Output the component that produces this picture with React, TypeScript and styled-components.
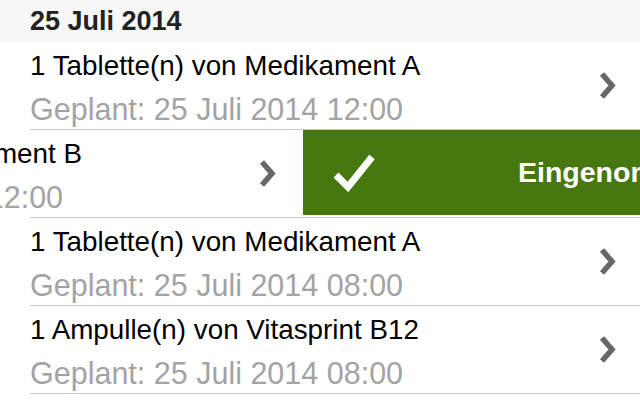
import React from 'react';
import styled, { createGlobalStyle } from 'styled-components';

const GlobalStyle = createGlobalStyle`
  html, body {
    margin: 0;
    padding: 0;
    background: #ffffff;
    overflow: hidden;
  }
  body {
    font-family: "Liberation Sans", Arial, Helvetica, sans-serif;
  }
`;

const Screen = styled.div`
  width: 640px;
  height: 400px;
  overflow: hidden;
  background: #ffffff;
`;

const SectionHeader = styled.div`
  height: 42px;
  display: flex;
  align-items: center;
  padding-left: 30px;
  background: #f7f7f7;
  font-size: 27px;
  font-weight: bold;
  color: #222222;
`;

const Row = styled.div`
  height: 87px;
  overflow: hidden;
`;

const Track = styled.div<{ offset: number }>`
  display: flex;
  height: 100%;
  transform: translateX(${({ offset }) => -offset}px);
`;

const Cell = styled.div`
  flex: 0 0 640px;
  display: flex;
  align-items: center;
  box-sizing: border-box;
  padding: 0 23px 0 30px;
`;

const Texts = styled.div`
  flex: 1;
  align-self: flex-start;
  padding-top: 7px;
  display: flex;
  flex-direction: column;
  white-space: nowrap;
`;

const Title = styled.div`
  font-size: 27.8px;
  line-height: 34px;
  color: #000000;
`;

const Subtitle = styled.div`
  margin-top: 7px;
  font-size: 30.5px;
  line-height: 38px;
  color: #a3a3a3;
`;

const Divider = styled.div`
  height: 1px;
  margin-left: 30px;
  background: #c8c7cc;
`;

const Action = styled.div`
  flex: 0 0 340px;
  margin: 0 0 2px 3px;
  display: flex;
  align-items: center;
  padding-left: 30px;
  background: #46780f;
  color: #ffffff;
  font-size: 28.5px;
  font-weight: bold;
  white-space: nowrap;
`;

const ActionLabel = styled.span`
  margin-left: 143px;
`;

function Chevron() {
  return (
    <svg width="19" height="29" viewBox="0 0 19 29">
      <polyline
        points="4,3 14,14.5 4,26"
        fill="none"
        stroke="#676767"
        strokeWidth="5.5"
        strokeLinejoin="miter"
      />
    </svg>
  );
}

function Check() {
  return (
    <svg width="42" height="42" viewBox="0 0 42 42">
      <polyline
        points="3,23 15,35 39,5"
        fill="none"
        stroke="#ffffff"
        strokeWidth="7"
        strokeLinejoin="miter"
      />
    </svg>
  );
}

type Item = { title: string; planned: string; swiped?: boolean };

const items: Item[] = [
  { title: '1 Tablette(n) von Medikament A', planned: 'Geplant: 25 Juli 2014 12:00' },
  { title: '1 Tablette(n) von Medikament B', planned: 'Geplant: 25 Juli 2014 12:00', swiped: true },
  { title: '1 Tablette(n) von Medikament A', planned: 'Geplant: 25 Juli 2014 08:00' },
  { title: '1 Ampulle(n) von Vitasprint B12', planned: 'Geplant: 25 Juli 2014 08:00' },
];

export default function App() {
  return (
    <>
      <GlobalStyle />
      <Screen>
        <SectionHeader>25 Juli 2014</SectionHeader>
        {items.map((item, i) => (
          <React.Fragment key={i}>
            <Row>
              <Track offset={item.swiped ? 340 : 0}>
                <Cell>
                  <Texts>
                    <Title>{item.title}</Title>
                    <Subtitle>{item.planned}</Subtitle>
                  </Texts>
                  <Chevron />
                </Cell>
                {item.swiped && (
                  <Action>
                    <Check />
                    <ActionLabel>Eingenommen</ActionLabel>
                  </Action>
                )}
              </Track>
            </Row>
            <Divider />
          </React.Fragment>
        ))}
      </Screen>
    </>
  );
}
